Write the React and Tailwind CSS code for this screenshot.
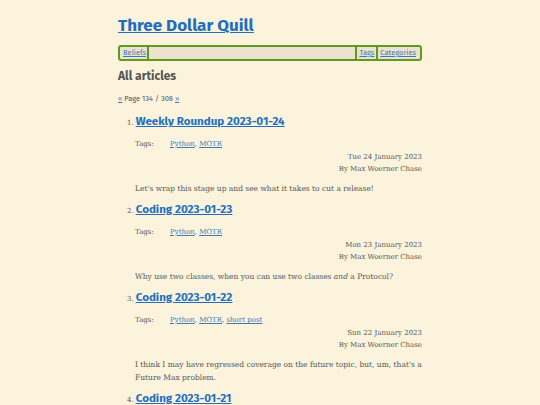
import React from 'react';

const posts = [
  {
    title: 'Weekly Roundup 2023-01-24',
    tags: ['Python', 'MOTR'],
    date: 'Tue 24 January 2023',
    summary: <>Let's wrap this stage up and see what it takes to cut a release!</>,
  },
  {
    title: 'Coding 2023-01-23',
    tags: ['Python', 'MOTR'],
    date: 'Mon 23 January 2023',
    summary: <>Why use two classes, when you can use two classes <em>and</em> a Protocol?</>,
  },
  {
    title: 'Coding 2023-01-22',
    tags: ['Python', 'MOTR', 'short post'],
    date: 'Sun 22 January 2023',
    summary: <>I think I may have regressed coverage on the future topic, but, um, that's a Future Max problem.</>,
  },
  {
    title: 'Coding 2023-01-21',
    tags: ['Python', 'MOTR'],
    date: 'Sat 21 January 2023',
    summary: <>More work.</>,
  },
];

const heading = { fontFamily: '"Fira Sans", Lato, "Open Sans", sans-serif' };
const body = { fontFamily: '"Roboto Slab", "DejaVu Serif", serif' };

const Sep = () => <span className="w-[2px] self-stretch bg-[#5f9a1e]" />;

const App = () => {
  return (
    <div className="h-[405px] overflow-hidden bg-[#fbf3dc] text-[#555]">
      <div className="w-[304px] mx-auto pt-[15px]">
        <h1 className="text-[17px] font-bold leading-[22px] text-[#1f6fc1] underline" style={heading}>
          <a href="#">Three Dollar Quill</a>
        </h1>
        <nav
          className="mt-[8px] h-[16px] flex items-stretch border-2 border-[#5f9a1e] rounded-[3px] bg-[#ebe3cf] text-[7.5px] px-[2px]"
          style={heading}
        >
          <a href="#" className="text-[#3b79b8] underline px-[1px] leading-[12px]">Beliefs</a>
          <Sep />
          <span className="flex-1" />
          <Sep />
          <a href="#" className="text-[#3b79b8] underline px-[2px] leading-[12px]">Tags</a>
          <Sep />
          <a href="#" className="text-[#3b79b8] underline px-[2px] leading-[12px]">Categories</a>
        </nav>
        <h2 className="mt-[7px] text-[12px] font-bold text-[#555] leading-[16px]" style={heading}>All articles</h2>
        <p className="mt-[10px] text-[7.5px] leading-[10px]" style={heading}>
          <a href="#" className="text-[#3b79b8] underline">«</a> Page 134 / 308{' '}
          <a href="#" className="text-[#3b79b8] underline">»</a>
        </p>
        <ol className="mt-[9px] pl-[17px]">
          {posts.map((p, i) => (
            <li key={i} className="flex flex-col mb-[6.5px]">
              <div className="flex items-baseline gap-[2px] -ml-[8px]">
                <span className="text-[7px] text-[#555]" style={body}>{i + 1}.</span>
                <a href="#" className="text-[11.6px] font-bold text-[#1f6fc1] underline leading-[16px]" style={heading}>
                  {p.title}
                </a>
              </div>
              <div className="text-[7px] leading-[12.5px] mt-[9px]" style={body}>
                <div className="flex">
                  <span className="w-[35px]">Tags:</span>
                  <span>
                    {p.tags.map((t, j) => (
                      <React.Fragment key={t}>
                        {j > 0 && ', '}
                        <a href="#" className="text-[#3b79b8] underline">{t}</a>
                      </React.Fragment>
                    ))}
                  </span>
                </div>
                <div className="text-right">{p.date}</div>
                <div className="text-right">By Max Woerner Chase</div>
                <p className="mt-[6px] text-[7.5px] leading-[13px]">{p.summary}</p>
              </div>
            </li>
          ))}
        </ol>
      </div>
    </div>
  );
};

export default App;
